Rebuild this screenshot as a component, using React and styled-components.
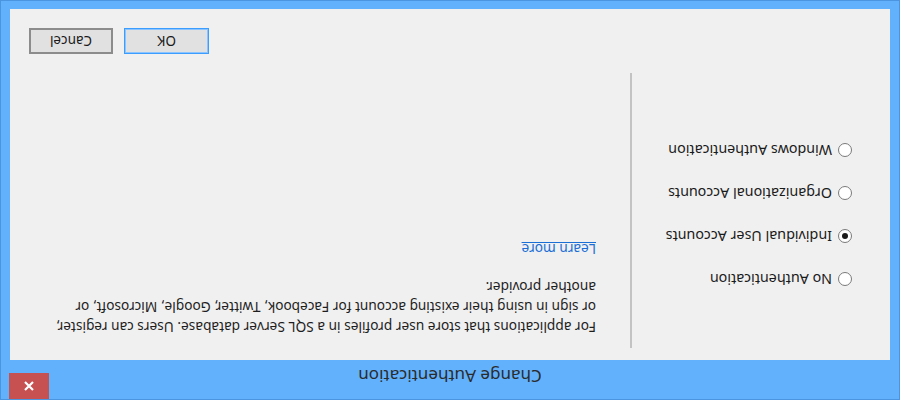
import React from 'react';
import styled, { createGlobalStyle } from 'styled-components';

const GlobalStyle = createGlobalStyle`
  html, body {
    margin: 0;
    padding: 0;
    background: #62b1fd;
  }
  * {
    box-sizing: border-box;
  }
`;

const options = [
  { id: 'none', label: 'No Authentication' },
  { id: 'individual', label: 'Individual User Accounts' },
  { id: 'org', label: 'Organizational Accounts' },
  { id: 'windows', label: 'Windows Authentication' },
];

const App = () => {
  const selected = 'individual';
  return (
    <>
      <GlobalStyle />
      <Window>
        <TitleBar>
          <Title>Change Authentication</Title>
          <CloseButton aria-label="close">
            <svg width="12" height="12" viewBox="0 0 12 12">
              <path d="M2 2 L10 10 M10 2 L2 10" stroke="#fff" strokeWidth="2.2" />
            </svg>
          </CloseButton>
        </TitleBar>
        <Body>
          <Main>
            <RadioGroup>
              {options.map(o => (
                <RadioRow key={o.id}>
                  <Radio checked={o.id === selected} />
                  <span>{o.label}</span>
                </RadioRow>
              ))}
            </RadioGroup>
            <Separator />
            <Description>
              <p>
                For applications that store user profiles in a SQL Server database. Users can register,
                or sign in using their existing account for Facebook, Twitter, Google, Microsoft, or
                another provider.
              </p>
              <a href="#learn">Learn more</a>
            </Description>
          </Main>
          <Footer>
            <Button primary>OK</Button>
            <Button>Cancel</Button>
          </Footer>
        </Body>
      </Window>
    </>
  );
};

const Window = styled.div`
  width: 900px;
  height: 400px;
  display: flex;
  flex-direction: column;
  background: #62b1fd;
  border: 1px solid #4a94e0;
  transform: rotate(180deg);
  font-family: 'Noto Sans', 'Open Sans', sans-serif;
  color: #1e1e1e;
`;

const TitleBar = styled.div`
  height: 39px;
  display: flex;
  align-items: flex-start;
  justify-content: center;
  position: relative;
`;

const Title = styled.div`
  margin-top: 11px;
  font-size: 17px;
  color: #2b2b2b;
`;

const CloseButton = styled.div`
  position: absolute;
  top: 0;
  right: 8px;
  width: 40px;
  height: 26px;
  background: #c75050;
  display: flex;
  align-items: center;
  justify-content: center;
`;

const Body = styled.div`
  flex: 1;
  margin: 0 9px 8px 9px;
  background: #f0f0f0;
  padding: 12px 0 19px 0;
  display: flex;
  flex-direction: column;
`;

const Main = styled.div`
  height: 275px;
  display: flex;
`;

const RadioGroup = styled.div`
  width: 258px;
  padding: 47px 0 0 38px;
  display: flex;
  flex-direction: column;
`;

const RadioRow = styled.label`
  height: 43px;
  display: flex;
  align-items: center;
  gap: 6px;
  font-size: 14.3px;
  color: #1a1a1a;
`;

const Radio = styled.span`
  width: 14px;
  height: 14px;
  border-radius: 50%;
  border: 1px solid #7a7a7a;
  background: #fff;
  display: flex;
  align-items: center;
  justify-content: center;
  flex-shrink: 0;

  &::after {
    content: '';
    width: 6px;
    height: 6px;
    border-radius: 50%;
    background: ${p => (p.checked ? '#1a1a1a' : 'transparent')};
  }
`;

const Separator = styled.div`
  width: 2px;
  background: #c3c3c3;
`;

const Description = styled.div`
  padding: 11px 0 0 34px;
  width: 610px;
  font-size: 13.7px;
  line-height: 20px;

  p {
    margin: 0 0 18px 0;
    width: 548px;
  }

  a {
    color: #1a6fd6;
    text-decoration: underline;
  }
`;

const Footer = styled.div`
  margin-top: 19px;
  display: flex;
  justify-content: flex-end;
  gap: 11px;
  padding-right: 19px;
`;

const Button = styled.button`
  width: ${p => (p.primary ? '85px' : '84px')};
  height: 26px;
  background: #e1e1e1;
  border: ${p => (p.primary ? '1px solid #3c9dff' : '2px solid #8c8c8c')};
  box-shadow: ${p => (p.primary ? 'inset 0 0 0 1px #8cc4ff' : 'none')};
  font-family: 'Noto Sans', 'Open Sans', sans-serif;
  font-size: 13.5px;
  color: #1a1a1a;
  padding: 0;
`;

export default App;
